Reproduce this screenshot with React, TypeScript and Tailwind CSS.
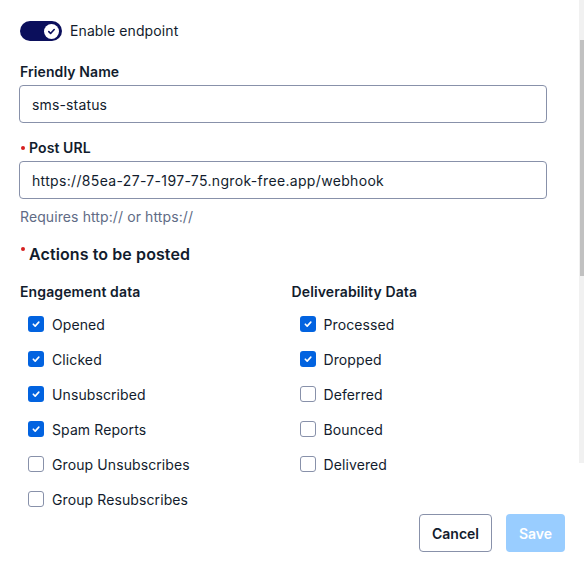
import { useState } from 'react';

const engagement: [string, boolean][] = [
  ['Opened', true],
  ['Clicked', true],
  ['Unsubscribed', true],
  ['Spam Reports', true],
  ['Group Unsubscribes', false],
  ['Group Resubscribes', false],
];

const deliverability: [string, boolean][] = [
  ['Processed', true],
  ['Dropped', true],
  ['Deferred', false],
  ['Bounced', false],
  ['Delivered', false],
];

function Check({ label, checked }: { label: string; checked: boolean }) {
  return (
    <label className="flex h-[20px] items-center gap-[8px] pl-[8px] text-[14px] tracking-[0.1px] text-[#121c2d]">
      {checked ? (
        <span className="flex h-[16px] w-[16px] items-center justify-center rounded-[3px] bg-[#0263e0]">
          <svg width="10" height="10" viewBox="0 0 10 10" fill="none">
            <path d="M2.3 5.2l1.9 1.9 3.6-4" stroke="#fff" strokeWidth="1.6" strokeLinecap="round" strokeLinejoin="round" />
          </svg>
        </span>
      ) : (
        <span className="h-[16px] w-[16px] rounded-[3px] border border-[#8891aa] bg-white" />
      )}
      <span>{label}</span>
    </label>
  );
}

export default function App() {
  const [name] = useState('sms-status');
  const [url] = useState('https://85ea-27-7-197-75.ngrok-free.app/webhook');

  return (
    <div className="relative h-[580px] w-[584px] overflow-hidden bg-white font-['Inter',sans-serif] text-[#121c2d]">
      <div className="flex flex-col pl-[19px] pr-[37px] pt-[21px]">
        <div className="flex h-[20px] items-center gap-[8px] pl-[1px]">
          <span className="flex h-[20px] w-[42px] items-center justify-end rounded-full bg-[#0b0f5c] pr-[3px]">
            <span className="flex h-[15px] w-[15px] items-center justify-center rounded-full bg-white">
              <svg width="9" height="9" viewBox="0 0 10 10" fill="none">
                <path d="M2 5.2l2 2 4-4.4" stroke="#0b0f5c" strokeWidth="1.8" strokeLinecap="round" strokeLinejoin="round" />
              </svg>
            </span>
          </span>
          <span className="-mt-[2px] text-[14px] tracking-[0.1px]">Enable endpoint</span>
        </div>

        <div className="mt-[21px] pl-[1px] text-[14px] font-semibold leading-[20px] tracking-[0.1px]">Friendly Name</div>
        <div className="mt-[3px] flex h-[38px] items-center rounded-[4px] border border-[#8891aa] px-[12px] text-[14px] tracking-[0.15px]">
          {name}
        </div>

        <div className="mt-[15px] flex items-center pl-[2px] text-[14px] font-semibold leading-[20px] tracking-[0.1px]">
          <span className="mr-[4px] inline-block h-[4px] w-[4px] rounded-full bg-[#d61f1f]" />
          Post URL
        </div>
        <div className="mt-[3px] flex h-[38px] items-center rounded-[4px] border border-[#8891aa] px-[12px] text-[14px] tracking-[0.33px]">
          {url}
        </div>
        <div className="mt-[8px] pl-[1px] text-[14px] leading-[20px] tracking-[0.1px] text-[#606b85]">
          Requires http:// or https://
        </div>

        <div className="mt-[15px] flex items-start pl-[2px] text-[16px] font-semibold leading-[24px] tracking-[0.1px]">
          <span className="mr-[4px] mt-[5px] inline-block h-[4px] w-[4px] rounded-full bg-[#d61f1f]" />
          Actions to be posted
        </div>

        <div className="mt-[16px] grid grid-cols-2 pl-[1px]">
          <div className="flex flex-col">
            <div className="text-[14px] font-semibold leading-[20px] tracking-[0.12px]">Engagement data</div>
            <div className="mt-[12px] flex flex-col gap-[15px]">
              {engagement.map(([l, c]) => (
                <Check key={l} label={l} checked={c} />
              ))}
            </div>
          </div>
          <div className="flex flex-col pl-[8px]">
            <div className="text-[14px] font-semibold leading-[20px] tracking-[0.12px]">Deliverability Data</div>
            <div className="mt-[12px] flex flex-col gap-[15px]">
              {deliverability.map(([l, c]) => (
                <Check key={l} label={l} checked={c} />
              ))}
            </div>
          </div>
        </div>
      </div>

      <div className="mt-[5px] flex justify-end gap-[14px] pr-[19px]">
        <button className="h-[38px] w-[73px] rounded-[4px] border border-[#8891aa] bg-white text-[14px] font-semibold text-[#121c2d]">
          Cancel
        </button>
        <button className="h-[38px] w-[59px] rounded-[4px] bg-[#99cdff] text-[14px] font-semibold text-white">
          Save
        </button>
      </div>

      <div className="absolute right-0 top-0 h-[463px] w-[5px] bg-[#f1f1f1]">
        <div className="ml-[1px] mt-[40px] h-[236px] w-[4px] bg-[#c1c1c1]" />
      </div>
    </div>
  );
}
